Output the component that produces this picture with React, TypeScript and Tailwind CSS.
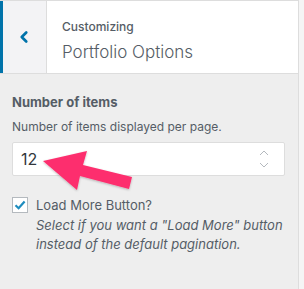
import { ChevronLeft } from 'lucide-react';

const font = { fontFamily: 'Inter, "Liberation Sans", sans-serif' };

function PinkArrow() {
  // callout arrow pointing at the number field
  return (
    <svg
      className="absolute left-0 top-0 pointer-events-none"
      width="304"
      height="289"
      viewBox="0 0 304 289"
    >
      <defs>
        <filter id="sh" x="-20%" y="-20%" width="140%" height="140%">
          <feDropShadow dx="0" dy="1" stdDeviation="1" floodColor="#000" floodOpacity="0.25" />
        </filter>
      </defs>
      <polygon
        points="43,161 87,151 83,165 132,177 129,189 80,176 77,190"
        fill="#fd2f6e"
        filter="url(#sh)"
      />
    </svg>
  );
}

export default function App() {
  return (
    <div className="relative w-[304px] h-[289px] bg-[#f5f5f5] overflow-hidden" style={font}>
      <div className="w-[299px] h-full bg-[#eeeeee] border-r border-[#dddddd] flex flex-col">
        <header className="h-[74px] bg-white border-t border-b border-[#dddddd] flex">
          <div className="w-[47px] h-full bg-[#f3f3f5] border-l-[3px] border-[#0073aa] border-r border-r-[#dddddd] flex items-center justify-center">
            <ChevronLeft size={18} strokeWidth={3.6} className="text-[#0073aa] -ml-[2px]" />
          </div>
          <div className="pl-[15px] pt-[18px] flex flex-col">
            <span className="text-[12px] leading-[16px] text-[#555d66] font-medium">Customizing</span>
            <span className="text-[17px] leading-[22px] mt-[6px] text-[#555d66] font-light">Portfolio Options</span>
          </div>
        </header>

        <div className="pl-[12px] pr-[13px] pt-[20px] text-[#555d66]">
          <div className="text-[13px] leading-[16px] font-bold">Number of items</div>
          <div className="text-[12px] leading-[16px] mt-[9px]">Number of items displayed per page.</div>

          <div className="mt-[7px] h-[34px] bg-white border border-[#dddddd] rounded-[2px] flex items-center justify-between pl-[8px] pr-[15px]">
            <span className="text-[16px] text-[#32373c]">12</span>
            <div className="flex flex-col items-center gap-[6px]">
              <svg width="10" height="6" viewBox="0 0 10 6">
                <path d="M1 5 L5 1 L9 5" fill="none" stroke="#b4b9be" strokeWidth="1" />
              </svg>
              <svg width="10" height="6" viewBox="0 0 10 6">
                <path d="M1 1 L5 5 L9 1" fill="none" stroke="#b4b9be" strokeWidth="1" />
              </svg>
            </div>
          </div>

          <div className="mt-[21px] flex items-start gap-[8px]">
            <div className="w-[16px] h-[16px] shrink-0 bg-white border border-[#b4b9be] flex items-center justify-center">
              <svg width="12" height="12" viewBox="0 0 12 12">
                <path d="M1.5 6.2 L4.6 9.2 L10.6 2.4" fill="none" stroke="#1e8cbe" strokeWidth="2.2" />
              </svg>
            </div>
            <div className="flex flex-col">
              <span className="text-[13px] leading-[16px]">Load More Button?</span>
              <span className="text-[13px] leading-[19px] italic mt-[3px]">
                Select if you want a "Load More" button instead of the default pagination.
              </span>
            </div>
          </div>
        </div>
      </div>
      <PinkArrow />
    </div>
  );
}
